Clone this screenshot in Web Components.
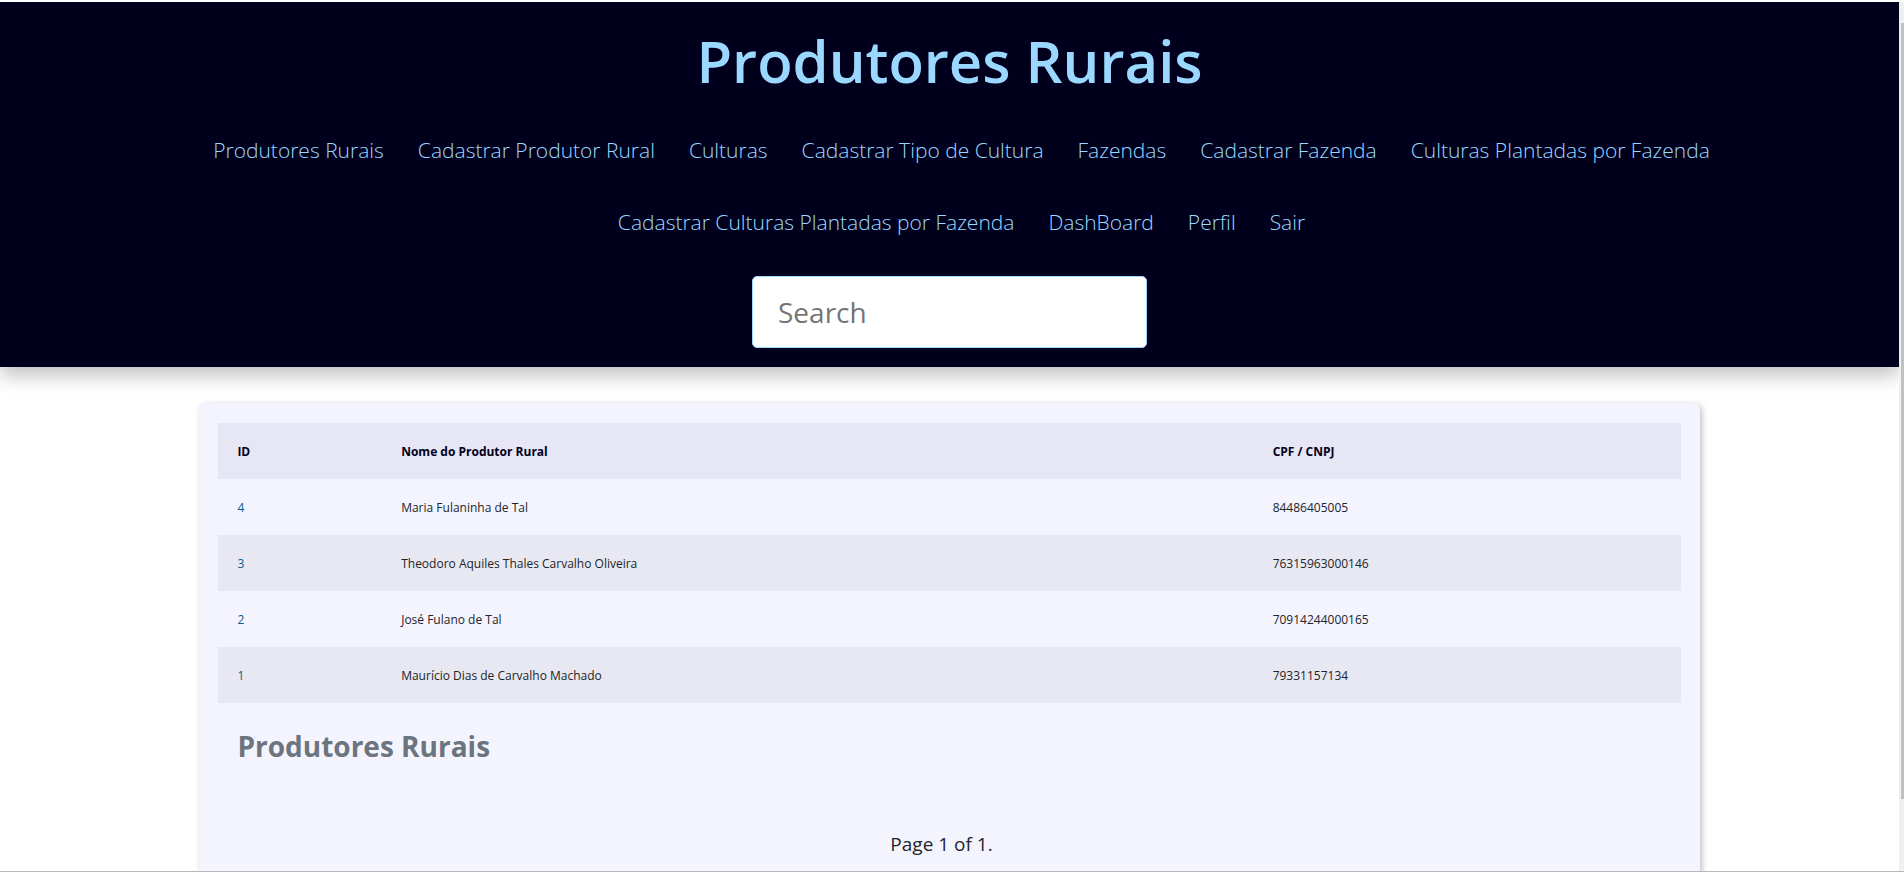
<!DOCTYPE html>
<html lang="pt-BR">
<head>
<meta charset="utf-8">
<title>Produtores Rurais</title>
<style>
  body { margin: 0; font-family: "Open Sans", "Noto Sans", sans-serif; color: #212529; background: #fff; }
</style>
</head>
<body>
<app-shell>
  <site-header>
    <span slot="title">Produtores Rurais</span>
    <nav-link>Produtores Rurais</nav-link>
    <nav-link>Cadastrar Produtor Rural</nav-link>
    <nav-link>Culturas</nav-link>
    <nav-link>Cadastrar Tipo de Cultura</nav-link>
    <nav-link>Fazendas</nav-link>
    <nav-link>Cadastrar Fazenda</nav-link>
    <nav-link>Culturas Plantadas por Fazenda</nav-link>
    <nav-link>Cadastrar Culturas Plantadas por Fazenda</nav-link>
    <nav-link>DashBoard</nav-link>
    <nav-link>Perfil</nav-link>
    <nav-link>Sair</nav-link>
    <search-box slot="search"></search-box>
  </site-header>
  <content-card>
    <producer-table></producer-table>
    <span slot="pages">Page 1 of 1.</span>
  </content-card>
</app-shell>

<script>
class BaseElement extends HTMLElement {
  constructor() {
    super();
    this.attachShadow({ mode: 'open' }).innerHTML =
      '<style>*{box-sizing:border-box}' + this.constructor.css + '</style>' + this.constructor.html;
  }
}

class AppShell extends BaseElement {
  static css = `
    :host { display: grid; grid-template-columns: 1fr 5px; height: 100vh; box-sizing: border-box;
      border-top: 2px solid #fff; border-bottom: 1px solid #b9b7b9; overflow: hidden; }
    main { min-width: 0; min-height: 0; overflow: hidden; }
    .track { background: #f0f0f0; margin-top: -2px; padding: 23px 0 72px 2px; display: flex; min-height: 0; }
    .thumb { flex: 1; background: #c1c1c1; }`;
  static html = `<main><slot></slot></main><div class="track"><div class="thumb"></div></div>`;
}

class SiteHeader extends BaseElement {
  static css = `
    :host { display: flex; flex-direction: column; align-items: center; background: #00001c;
      padding: 19px 0; box-shadow: 0 9px 18px rgba(0,0,0,.24); }
    h1 { margin: 0; font-size: 58px; line-height: 80px; font-weight: 600; color: #9bd8ff; }
    nav { display: flex; flex-wrap: wrap; justify-content: center; gap: 36px 34px;
      max-width: 1600px; padding: 31px 0 36px 24px; }`;
  static html = `<h1><slot name="title"></slot></h1><nav><slot></slot></nav><slot name="search"></slot>`;
}

class NavLink extends BaseElement {
  static css = `
    :host { display: block; }
    a { display: block; font-size: 21px; line-height: 36px; font-weight: 300; color: #9bd8ff;
      text-decoration: none; white-space: nowrap; }`;
  static html = `<a href="#"><slot></slot></a>`;
}

class SearchBox extends BaseElement {
  static css = `
    :host { display: block; width: 395px; }
    input { display: block; width: 100%; height: 72px; padding: 0 25px; border: 1px solid #9bd8ff; border-radius: 5px;
      background: #fff; font: 400 28px "Open Sans", "Noto Sans", sans-serif; color: #212529; outline: 0; }
    input::placeholder { color: #757575; opacity: 1; }`;
  static html = `<input type="search" placeholder="Search" aria-label="Search">`;
}

class ContentCard extends BaseElement {
  static css = `
    :host { display: block; width: 79%; margin: 36px auto 0; padding: 20px 19px 60px; box-sizing: border-box;
      background: #f4f4ff; border-radius: 6px; box-shadow: 2px 2px 6px rgba(0,0,0,.25); }
    p { margin: 0; padding: 38px 16px 0 0; text-align: center; font-size: 19px; line-height: 32px; }`;
  static html = `<slot></slot><p><slot name="pages"></slot></p>`;
}

class ProducerTable extends BaseElement {
  static css = `
    :host { display: block; }
    table { width: 100%; table-layout: fixed; border-collapse: collapse; caption-side: bottom; }
    caption { padding: 21px 19px; text-align: left; font-size: 28px; line-height: 45px; font-weight: 700; color: #6c757d; }
    col:nth-child(1) { width: 11.2%; }
    col:nth-child(2) { width: 59.6%; }
    th, td { height: 56px; padding: 1px 19px 0; text-align: left; font-size: 12px; line-height: 20px; font-weight: 400; }
    th { font-weight: 700; color: #00001c; background: #e6e6f4; }
    tbody tr:nth-child(even) { background: #e8e8f2; }
    a { color: #10598a; text-decoration: none; }`;
  static html = `<table>
    <caption>Produtores Rurais</caption>
    <colgroup><col><col><col></colgroup>
    <thead><tr><th scope="col">ID</th><th scope="col">Nome do Produtor Rural</th><th scope="col">CPF / CNPJ</th></tr></thead>
    <tbody>
      <tr><td><a href="#">4</a></td><td>Maria Fulaninha de Tal</td><td>84486405005</td></tr>
      <tr><td><a href="#">3</a></td><td>Theodoro Aquiles Thales Carvalho Oliveira</td><td>76315963000146</td></tr>
      <tr><td><a href="#">2</a></td><td>José Fulano de Tal</td><td>70914244000165</td></tr>
      <tr><td><a href="#">1</a></td><td>Maurício Dias de Carvalho Machado</td><td>79331157134</td></tr>
    </tbody></table>`;
}

customElements.define('app-shell', AppShell);
customElements.define('site-header', SiteHeader);
customElements.define('nav-link', NavLink);
customElements.define('search-box', SearchBox);
customElements.define('content-card', ContentCard);
customElements.define('producer-table', ProducerTable);
</script>
</body>
</html>
